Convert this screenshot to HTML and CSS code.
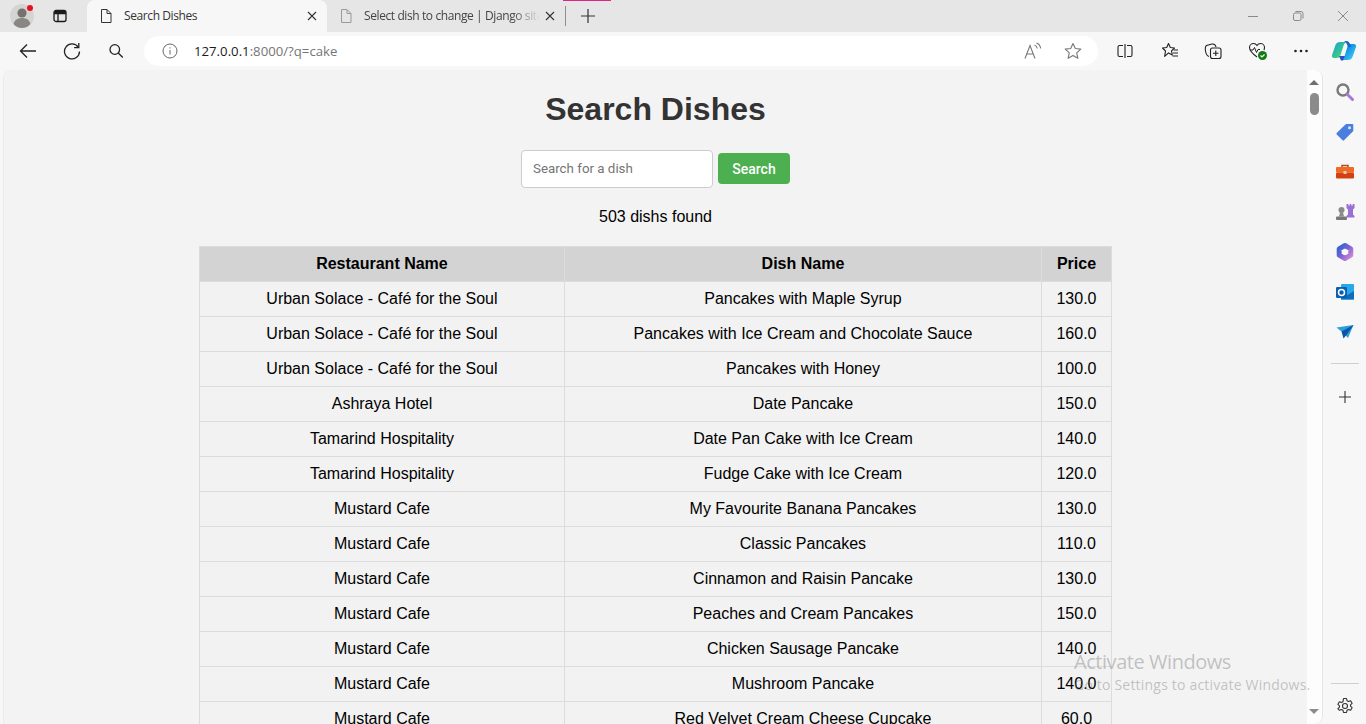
FILE: index.html
```html
<!DOCTYPE html>
<html lang="en">
<head>
<meta charset="utf-8">
<title>Search Dishes</title>
<link rel="stylesheet" href="styles.css">
</head>
<body>
<div class="browser">
  <header class="tabstrip">
    <div class="avatar">
      <svg width="24" height="24" viewBox="0 0 24 24"><circle cx="12" cy="12" r="12" fill="#d4d4d2"/><circle cx="12" cy="9" r="4.600" fill="#77726f"/><path d="M3.600 20c.8-4 4-6 8.400-6s7.600 2 8.400 6c-2 2.600-5 4-8.400 4s-6.400-1.400-8.400-4z" fill="#8a8683"/></svg>
      <span class="avatar-dot"></span>
    </div>
    <div class="strip-btn">
      <svg width="16" height="16" viewBox="0 0 16 16" fill="none" stroke="#1a1a1a" stroke-width="1.300"><rect x="2" y="2.500" width="12" height="11" rx="2"/><path d="M2 5.500h12M6 5.500v8" /><path d="M2.500 3h11v2.500h-11z" fill="#1a1a1a" stroke="none"/></svg>
    </div>
    <div class="tab tab-active">
      <svg class="doc" width="16" height="16" viewBox="0 0 16 16" fill="none" stroke="#333" stroke-width="1"><path d="M3.500 1.500h5.500l4 4v9h-9.500z" stroke-linejoin="round"/><path d="M9 1.500v4h4"/></svg>
      <span class="tab-title">Search Dishes</span>
      <svg class="tab-x" width="10" height="10" viewBox="0 0 10 10" stroke="#333" stroke-width="1.100"><path d="M1 1l8 8M9 1l-8 8"/></svg>
    </div>
    <div class="tab">
      <svg class="doc" width="16" height="16" viewBox="0 0 16 16" fill="none" stroke="#9a9a9a" stroke-width="1"><path d="M3.500 1.500h5.500l4 4v9h-9.500z" stroke-linejoin="round"/><path d="M9 1.500v4h4"/></svg>
      <span class="tab-title tab-fade">Select dish to change | Django site admin</span>
      <svg class="tab-x" width="10" height="10" viewBox="0 0 10 10" stroke="#333" stroke-width="1.100"><path d="M1 1l8 8M9 1l-8 8"/></svg>
    </div>
    <span class="tab-sep"></span>
    <div class="newtab">
      <svg width="16" height="16" viewBox="0 0 16 16" stroke="#333" stroke-width="1.200"><path d="M8 1v14M1 8h14"/></svg>
    </div>
    <span class="pink"></span>
    <div class="winctrls">
      <svg width="12" height="12" viewBox="0 0 12 12" stroke="#8a8a8a"><path d="M1 6.500h10"/></svg>
      <svg width="12" height="12" viewBox="0 0 12 12" fill="none" stroke="#8a8a8a"><rect x="1.500" y="3" width="7.500" height="7.500" rx="1.500"/><path d="M3.500 1.500h5.500a2 2 0 0 1 2 2v5"/></svg>
      <svg width="12" height="12" viewBox="0 0 12 12" stroke="#8a8a8a"><path d="M1 1l10 10M11 1l-10 10"/></svg>
    </div>
  </header>

  <nav class="toolbar">
    <div class="nav-btn nb-back">
      <svg width="18" height="18" viewBox="0 0 18 18" fill="none" stroke="#222" stroke-width="1.300"><path d="M17 9H1.500M8 2.500L1.500 9 8 15.500"/></svg>
    </div>
    <div class="nav-btn nb-reload">
      <svg width="18" height="18" viewBox="0 0 18 18" fill="none" stroke="#222" stroke-width="1.300"><path d="M15.200 5.200A7.500 7.500 0 1 0 16.500 9.500"/><path d="M15.800 1v4.700h-4.700"/></svg>
    </div>
    <div class="nav-btn nb-search">
      <svg width="16" height="16" viewBox="0 0 16 16" fill="none" stroke="#222" stroke-width="1.300"><circle cx="6.800" cy="6.500" r="4.800"/><path d="M10.300 10l4.500 4.500"/></svg>
    </div>
    <div class="addressbar">
      <svg class="info" width="16" height="16" viewBox="0 0 16 16" fill="none" stroke="#666" stroke-width="1"><circle cx="8" cy="8" r="7"/><path d="M8 7v4.500M8 4.300v1.200"/></svg>
      <span class="url"><span class="url-host">127.0.0.1</span>:8000/?q=cake</span>
      <svg class="read" width="18" height="18" viewBox="0 0 18 18" fill="none" stroke="#777" stroke-width="1.100"><path d="M1 16.500L6 3.500 11 16.500M2.800 12h6.500"/><path d="M10.500 3c1.500.5 2.500 1.800 2.800 3.500M12.500 1c2.200.8 3.700 2.700 4.200 5.300"/></svg>
      <svg class="star" width="18" height="18" viewBox="0 0 18 18" fill="none" stroke="#777" stroke-width="1.100"><path d="M9 1.500l2.300 5 5.500.6-4.100 3.700 1.200 5.400L9 13.400l-4.900 2.800 1.200-5.400L1.200 7.100l5.500-.6z" stroke-linejoin="round"/></svg>
    </div>
    <div class="tool-btn tb-split">
      <svg width="16" height="16" viewBox="0 0 16 16" fill="none" stroke="#222" stroke-width="1.100"><path d="M6 2.500H2.500a1.500 1.500 0 0 0-1.500 1.500v8a1.500 1.500 0 0 0 1.500 1.500H6M10 2.500h3.500A1.500 1.500 0 0 1 15 4v8a1.500 1.500 0 0 1-1.500 1.500H10M8 1v14"/></svg>
    </div>
    <div class="tool-btn">
      <svg class="nudge" width="18" height="18" viewBox="0 0 18 18" fill="none" stroke="#222" stroke-width="1.100"><path d="M7.500 1.500l1.800 4 4.200.5-3 2.900.8 4.100-3.800-2.100-3.800 3.500.8-5.400L1.500 6l4.200-.5z" stroke-linejoin="round"/><path d="M12.500 8h4.500M12 11h5M11.500 14h5.500"/></svg>
    </div>
    <div class="tool-btn">
      <svg width="18" height="18" viewBox="0 0 18 18" fill="none" stroke="#222" stroke-width="1.100"><rect x="6.500" y="6" width="10.500" height="10.500" rx="2"/><path d="M11.800 8.500v5.500M9 11.200h5.500"/><path d="M5 14.500C3 14 2 12 1.500 9 1 6 1 4.500 2.500 3.500L8 2c2-.3 3.500.3 4 3"/></svg>
    </div>
    <div class="tool-btn health">
      <svg class="nudge" width="20" height="20" viewBox="0 0 20 20" fill="none"><path d="M9 16C5 13 1.500 10 1.500 6.500 1.500 4 3.500 2.500 5.500 2.500c1.500 0 2.700.7 3.500 2 .8-1.300 2-2 3.500-2 2 0 4 1.500 4 4 0 1-.2 1.600-.5 2.500" stroke="#222" stroke-width="1.100"/><path d="M2 9h3l1.500-2.500 2 5 1.500-3h2" stroke="#222" stroke-width="1"/><circle cx="14.500" cy="14.500" r="4.500" fill="#107c10"/><path d="M12.500 14.500l1.500 1.500 2.500-2.500" stroke="#fff" stroke-width="1.200"/></svg>
    </div>
    <div class="tool-btn">
      <svg width="16" height="16" viewBox="0 0 16 16" fill="#222"><circle cx="2.500" cy="8" r="1.300"/><circle cx="8" cy="8" r="1.300"/><circle cx="13.500" cy="8" r="1.300"/></svg>
    </div>
    <div class="tool-btn copilot">
      <svg width="26" height="26" viewBox="0 0 26 26">
        <defs>
          <linearGradient id="cpa" x1="0" y1="0" x2="1" y2="1"><stop offset="0" stop-color="#1f9ed8"/><stop offset="0.600" stop-color="#35c78e"/><stop offset="1" stop-color="#b4e58a"/></linearGradient>
          <linearGradient id="cpb" x1="0" y1="0" x2="1" y2="1"><stop offset="0" stop-color="#0c5fc7"/><stop offset="0.500" stop-color="#1aa3ea"/><stop offset="1" stop-color="#5ed1f5"/></linearGradient>
        </defs>
        <path d="M9 4h7c-2 .5-3 2-3.600 4l-2.800 9c-.5 1.800-1.800 3-3.600 3H3c-1.600 0-2.500-1.400-2-3L4.500 7C5.200 5 7 4 9 4z" fill="url(#cpa)"/>
        <path d="M17 22h-7c2-.5 3-2 3.600-4l2.800-9c.5-1.800 1.800-3 3.600-3h3c1.600 0 2.500 1.400 2 3l-3.500 10c-.7 2-2.500 3-4.500 3z" fill="url(#cpb)"/>
        <path d="M13 3h2.500c1.800 0 3 1.500 3.500 3l1 3h-3c-.5-1.500-1-3-2-4.500z" fill="#1564c8"/>
        <path d="M8 18l6 0-2 4.500h-2z" fill="#2b4fc7"/>
      </svg>
    </div>
  </nav>

  <div class="workspace">
    <div class="viewport">
      <main class="page">
        <h1 class="title">Search Dishes</h1>
        <form class="search">
          <input class="search-input" type="text" placeholder="Search for a dish">
          <button class="search-btn" type="button">Search</button>
        </form>
        <p class="count">503 dishs found</p>
        <table class="dishes">
          <thead>
            <tr><th class="c-rest">Restaurant Name</th><th class="c-dish">Dish Name</th><th class="c-price">Price</th></tr>
          </thead>
          <tbody>
            <tr><td>Urban Solace - Café for the Soul</td><td>Pancakes with Maple Syrup</td><td>130.0</td></tr>
            <tr><td>Urban Solace - Café for the Soul</td><td>Pancakes with Ice Cream and Chocolate Sauce</td><td>160.0</td></tr>
            <tr><td>Urban Solace - Café for the Soul</td><td>Pancakes with Honey</td><td>100.0</td></tr>
            <tr><td>Ashraya Hotel</td><td>Date Pancake</td><td>150.0</td></tr>
            <tr><td>Tamarind Hospitality</td><td>Date Pan Cake with Ice Cream</td><td>140.0</td></tr>
            <tr><td>Tamarind Hospitality</td><td>Fudge Cake with Ice Cream</td><td>120.0</td></tr>
            <tr><td>Mustard Cafe</td><td>My Favourite Banana Pancakes</td><td>130.0</td></tr>
            <tr><td>Mustard Cafe</td><td>Classic Pancakes</td><td>110.0</td></tr>
            <tr><td>Mustard Cafe</td><td>Cinnamon and Raisin Pancake</td><td>130.0</td></tr>
            <tr><td>Mustard Cafe</td><td>Peaches and Cream Pancakes</td><td>150.0</td></tr>
            <tr><td>Mustard Cafe</td><td>Chicken Sausage Pancake</td><td>140.0</td></tr>
            <tr><td>Mustard Cafe</td><td>Mushroom Pancake</td><td>140.0</td></tr>
            <tr><td>Mustard Cafe</td><td>Red Velvet Cream Cheese Cupcake</td><td>60.0</td></tr>
          </tbody>
        </table>
      </main>
      <div class="scrollbar">
        <span class="arrow-up"></span>
        <span class="thumb"></span>
        <span class="arrow-down"></span>
      </div>
    </div>
    <aside class="sidebar">
      <div class="side-item"><svg width="20" height="20" viewBox="0 0 20 20" fill="none"><circle cx="8" cy="8" r="5.500" stroke="#7a7a7a" stroke-width="2.400"/><path d="M12.500 12.500l5 5" stroke="#a678d8" stroke-width="3" stroke-linecap="round"/></svg></div>
      <div class="side-item"><svg width="20" height="20" viewBox="0 0 20 20"><path d="M11 2h6.500a.8.8 0 0 1 .8.800V9L9 18.300a1 1 0 0 1-1.400 0l-5.900-5.900a1 1 0 0 1 0-1.400z" fill="#4a7fe0"/><circle cx="14.500" cy="5.800" r="1.500" fill="#dfe8fa"/></svg></div>
      <div class="side-item"><svg width="20" height="20" viewBox="0 0 20 20"><path d="M7 5V3.500h6V5" fill="none" stroke="#b5472a" stroke-width="1.500"/><rect x="1" y="5" width="18" height="5.500" rx="1" fill="#ef6a22"/><rect x="1" y="10.500" width="18" height="6" rx="1" fill="#d2410f"/><rect x="8.500" y="9" width="3" height="3" fill="#f3c9a8"/></svg></div>
      <div class="side-item"><svg width="20" height="20" viewBox="0 0 20 20"><circle cx="6.500" cy="8" r="3" fill="#8a8a8a"/><path d="M5 10.500h3l1 4H4z" fill="#8a8a8a"/><rect x="1" y="14.500" width="11" height="3.500" rx="1" fill="#777"/><path d="M11.500 2h1.800v1.500h1.400V2h1.600v1.500h1.400V2H19.500v4l-1.500 1.500v5l1.500 1.500v1.500H11.500V14l1.500-1.500v-5L11.500 6z" fill="#9a6fd6"/></svg></div>
      <div class="side-item"><svg width="20" height="20" viewBox="0 0 20 20" fill="none"><defs><linearGradient id="m3" x1="0" y1="0" x2="1" y2="1"><stop offset="0" stop-color="#2f62c9"/><stop offset="0.500" stop-color="#7d63d6"/><stop offset="1" stop-color="#d48ad6"/></linearGradient></defs><path d="M10 3.500l5.800 3.300v6.400L10 16.500l-5.800-3.300V6.800z" stroke="url(#m3)" stroke-width="5" stroke-linejoin="round"/><circle cx="10" cy="10" r="2.500" fill="#f7f7f7"/></svg></div>
      <div class="side-item"><svg width="20" height="20" viewBox="0 0 20 20"><rect x="6" y="2" width="13" height="15.500" rx="1" fill="#28a8ea"/><path d="M6 9l6.500 4L19 9v8.500H6z" fill="#0f6cbd"/><rect x="1" y="5" width="11" height="11" rx="1.300" fill="#0a5fb0"/><circle cx="6.500" cy="10.500" r="3" fill="none" stroke="#fff" stroke-width="1.500"/></svg></div>
      <div class="side-item"><svg width="20" height="20" viewBox="0 0 20 20"><path d="M1.500 5.500L18.500 3 13 16 9 11.500z" fill="#2a9fd8"/><path d="M18.500 3L6.500 9.500l2 7 2.500-3z" fill="#0b53a8"/></svg></div>
      <hr class="side-rule">
      <div class="side-item side-add"><svg width="14" height="14" viewBox="0 0 14 14" stroke="#333" stroke-width="1.100"><path d="M7 1v12M1 7h12"/></svg></div>
      <hr class="side-rule side-bottom">
      <div class="side-item side-gear"><svg width="18" height="18" viewBox="0 0 18 18" fill="none" stroke="#333" stroke-width="1.100" stroke-linejoin="round"><circle cx="9" cy="9" r="2.500"/><path d="M7.500 1.500h3l.5 2.200 1.500.8 2.100-.8 1.500 2.600-1.600 1.500v1.400l1.600 1.500-1.500 2.600-2.100-.8-1.500.8-.5 2.200h-3l-.5-2.200-1.500-.8-2.100.8L1.900 11.700l1.600-1.500V8.800L1.900 7.300l1.500-2.600 2.100.8 1.500-.8z"/></svg></div>
    </aside>
  </div>

  <div class="activate">
    <div class="activate-head">Activate Windows</div>
    <div class="activate-sub">Go to Settings to activate Windows.</div>
  </div>
</div>
</body>
</html>
```

FILE: styles.css
```css
* { box-sizing: border-box; }
html, body { margin: 0; height: 100%; overflow: hidden; }
body { font-family: "Liberation Sans", Arial, sans-serif; background: #f7f7f7; }
.browser { position: relative; width: 1366px; height: 724px; display: flex; flex-direction: column; overflow: hidden; }

/* Tab strip */
.tabstrip { height: 32px; flex: none; display: flex; align-items: flex-end; background: #e6e6e6; position: relative; font-family: "Open Sans", "Noto Sans", sans-serif; font-size: 12px; color: #333; }
.avatar { width: 44px; height: 32px; padding: 4px 0 0 10px; position: relative; flex: none; }
.avatar-dot { position: absolute; left: 27px; top: 5px; width: 6px; height: 6px; border-radius: 50%; background: #e81123; }
.strip-btn { width: 43px; height: 32px; flex: none; display: flex; align-items: center; padding-left: 8px; }
.tab { width: 238px; height: 32px; flex: none; display: flex; align-items: center; padding-left: 11px; padding-right: 10px; }
.tab-active { width: 240px; background: #f7f7f7; border-radius: 8px 8px 0 0; }
.doc { flex: none; margin-right: 10px; }
.tab-title { flex: 1; white-space: nowrap; overflow: hidden; letter-spacing: -0.4px; line-height: 15px; margin-top: -1px; }
.tab-fade { -webkit-mask-image: linear-gradient(to right, #000 84%, transparent 100%); mask-image: linear-gradient(to right, #000 84%, transparent 100%); color: #444; margin-right: 5px; }
.tab-x { flex: none; }
.tab-sep { width: 1px; height: 20px; background: #8e8e8e; align-self: center; flex: none; }
.newtab { width: 44px; height: 32px; flex: none; display: flex; align-items: center; justify-content: center; }
.pink { position: absolute; left: 563px; top: 0; width: 48px; height: 1px; background: #e3218a; }
.winctrls { margin-left: auto; height: 32px; display: flex; align-items: center; gap: 33px; padding-right: 17px; }
.winctrls svg { flex: none; }

/* Toolbar */
.toolbar { height: 38px; flex: none; display: flex; align-items: center; background: #f7f7f7; }
.nav-btn { flex: none; display: flex; align-items: center; justify-content: center; height: 30px; }
.nb-back { width: 54px; padding-left: 1px; }
.nb-reload { width: 36px; }
.nb-search { width: 52px; }
.addressbar { flex: none; margin-left: 2px; width: 954px; height: 30px; border-radius: 15px; background: #fff; display: flex; align-items: center; padding: 0 16px 0 18px; font-family: "Open Sans", "Noto Sans", sans-serif; font-size: 13.200px; color: #767676; }
.info { flex: none; margin-right: 16px; }
.url { flex: 1; white-space: nowrap; }
.url-host { color: #1a1a1a; }
.read { flex: none; margin-right: 22px; }
.star { flex: none; }
.tool-btn { flex: none; width: 44px; height: 30px; display: flex; align-items: center; justify-content: center; }
.tb-split { margin-left: 5px; }
.copilot { margin-left: -1px; }
.nudge { margin-left: 2px; }

/* Workspace */
.workspace { flex: 1; min-height: 0; display: flex; }
.viewport { width: 1320px; margin-left: 3px; flex: none; display: flex; background: #f3f3f3; border-radius: 8px 8px 8px 0; overflow: hidden; border-left: 1px solid #ececec; }
.page { width: 1303px; flex: none; overflow: hidden; display: flex; flex-direction: column; align-items: center; color: #000; }
.title { margin: 21px 0 0; font-size: 32px; line-height: 37px; font-weight: 700; color: #333; }
.search { margin-top: 22px; display: flex; align-items: flex-start; gap: 5px; }
.search-input { width: 192px; height: 38px; padding: 0 11px 1px; border: 1px solid #ccc; border-radius: 4px; background: #fff; font-family: "Roboto", "Liberation Sans", sans-serif; font-size: 13.333px; outline: none; }
.search-input::placeholder { color: #757575; opacity: 1; }
.search-btn { width: 72px; height: 31px; margin-top: 3px; border: 0; border-radius: 4px; background: #4caf50; color: #fff; font-family: "Roboto", "Liberation Sans", sans-serif; font-size: 14px; font-weight: 500; padding: 0; }
.count { margin: 20px 0 0; font-size: 16px; line-height: 18px; }
.dishes { margin-top: 20px; width: 912.100px; flex: none; table-layout: fixed; border-collapse: collapse; font-size: 16px; line-height: 18px; }
.dishes th, .dishes td { border: 1px solid #dcdcdc; padding: 8px; text-align: center; white-space: nowrap; }
.dishes th { background: #d3d3d3; font-weight: 700; }
.dishes td { background: #f2f2f2; }
.c-rest { width: 365px; }
.c-dish { width: 477px; }
.c-price { width: 70.100px; }

/* Scrollbar */
.scrollbar { width: 16px; flex: none; background: #fdfdfd; position: relative; border-right: 1px solid #e4e4e4; border-radius: 0 8px 8px 0; }
.arrow-up { position: absolute; left: 2px; top: 10px; width: 0; height: 0; border-left: 5px solid transparent; border-right: 5px solid transparent; border-bottom: 5px solid #6f6f6f; }
.thumb { position: absolute; left: 3px; top: 23px; width: 9px; height: 22px; border-radius: 5px; background: #8b8b8b; }
.arrow-down { position: absolute; left: 2px; bottom: 10px; width: 0; height: 0; border-left: 5px solid transparent; border-right: 5px solid transparent; border-top: 5px solid #8b8b8b; }

/* Sidebar */
.sidebar { flex: 1; display: flex; flex-direction: column; align-items: center; padding-top: 2px; background: #f7f7f7; }
.side-item { width: 100%; height: 40px; flex: none; display: flex; align-items: center; justify-content: center; }
.side-rule { width: 28px; margin: 11px 0 0; border: 0; border-top: 1px solid #cfcfcf; flex: none; }
.side-add { height: 32px; margin-top: 17px; }
.side-bottom { margin-top: auto; margin-bottom: 0; }
.side-gear { height: 40px; padding-top: 3px; }

/* Watermark */
.activate { position: absolute; left: 1074px; top: 649px; font-family: "Open Sans", "Noto Sans", sans-serif; color: rgba(120, 120, 120, 0.42); pointer-events: none; white-space: nowrap; }
.activate-head { font-size: 20px; line-height: 25px; letter-spacing: -0.45px; }
.activate-sub { font-size: 14px; line-height: 20px; margin-top: 1px; letter-spacing: 0.2px; }
```
